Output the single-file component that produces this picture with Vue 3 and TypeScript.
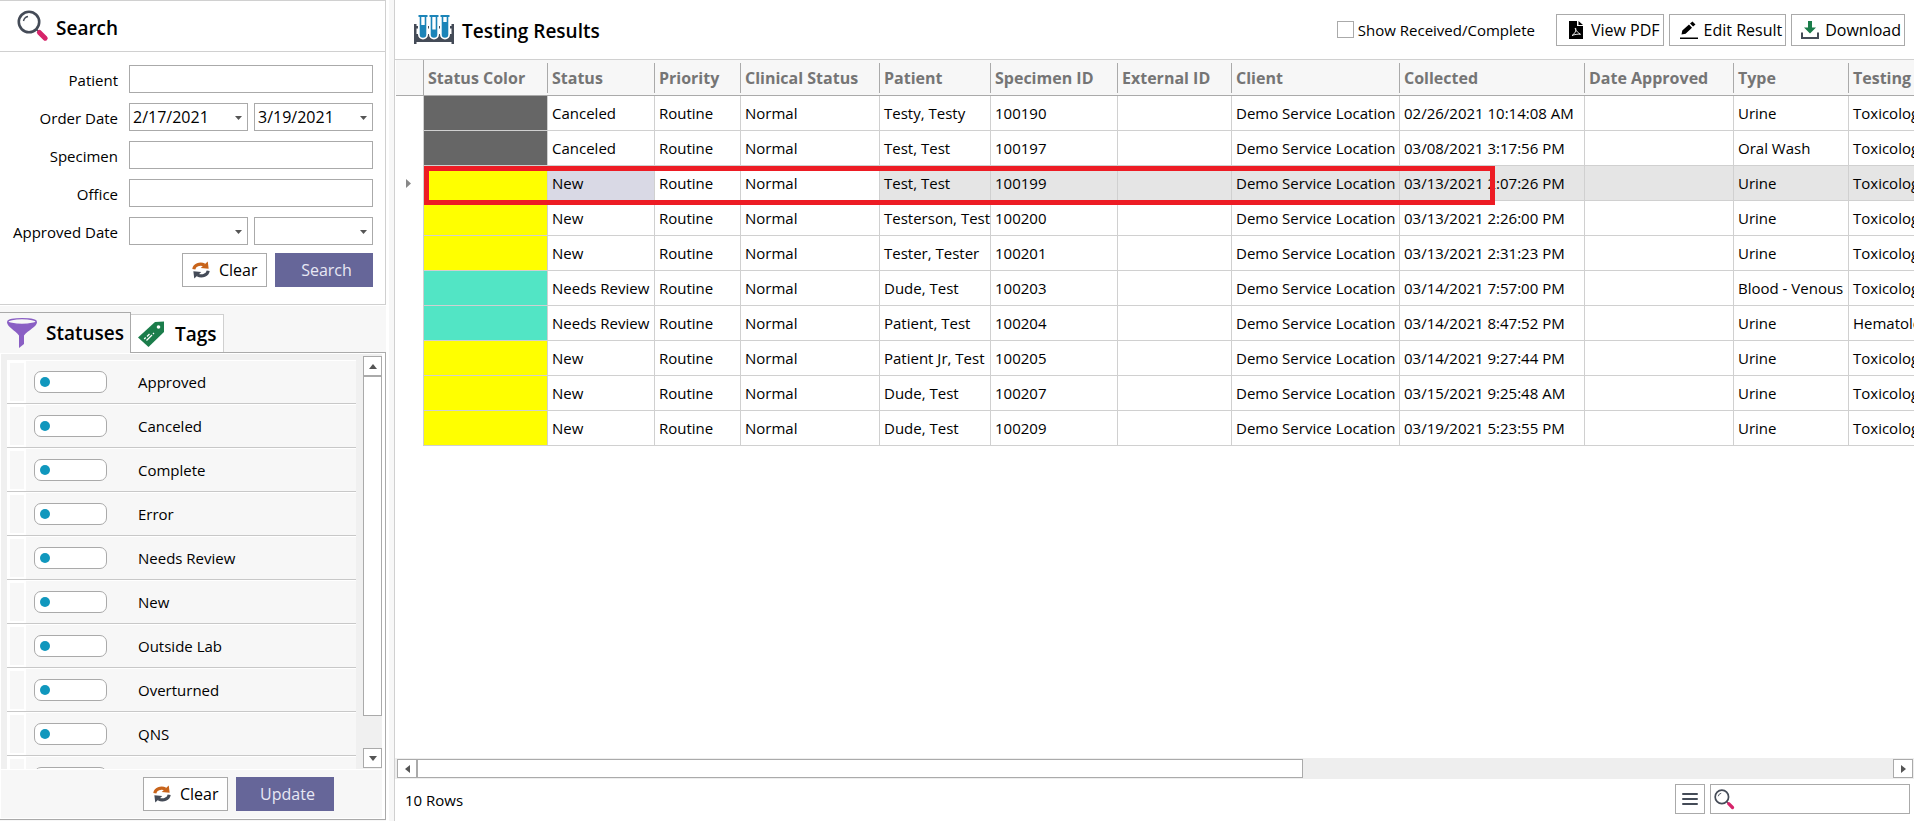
<script setup lang="ts">
import { ref } from 'vue'

interface Column { key: string; label: string; width: number }
interface Row {
  color: string; status: string; patient: string; specimen: string
  collected: string; type: string; testing: string
}

const columns: Column[] = [
  { key: 'color', label: 'Status Color', width: 124 },
  { key: 'status', label: 'Status', width: 107 },
  { key: 'priority', label: 'Priority', width: 86 },
  { key: 'clinical', label: 'Clinical Status', width: 139 },
  { key: 'patient', label: 'Patient', width: 111 },
  { key: 'specimen', label: 'Specimen ID', width: 127 },
  { key: 'external', label: 'External ID', width: 114 },
  { key: 'client', label: 'Client', width: 168 },
  { key: 'collected', label: 'Collected', width: 185 },
  { key: 'approved', label: 'Date Approved', width: 149 },
  { key: 'type', label: 'Type', width: 115 },
  { key: 'testing', label: 'Testing', width: 159 },
]

const rows: Row[] = [
  { color: 'gray', status: 'Canceled', patient: 'Testy, Testy', specimen: '100190', collected: '02/26/2021 10:14:08 AM', type: 'Urine', testing: 'Toxicology' },
  { color: 'gray', status: 'Canceled', patient: 'Test, Test', specimen: '100197', collected: '03/08/2021 3:17:56 PM', type: 'Oral Wash', testing: 'Toxicology' },
  { color: 'yellow', status: 'New', patient: 'Test, Test', specimen: '100199', collected: '03/13/2021 2:07:26 PM', type: 'Urine', testing: 'Toxicology' },
  { color: 'yellow', status: 'New', patient: 'Testerson, Test', specimen: '100200', collected: '03/13/2021 2:26:00 PM', type: 'Urine', testing: 'Toxicology' },
  { color: 'yellow', status: 'New', patient: 'Tester, Tester', specimen: '100201', collected: '03/13/2021 2:31:23 PM', type: 'Urine', testing: 'Toxicology' },
  { color: 'teal', status: 'Needs Review', patient: 'Dude, Test', specimen: '100203', collected: '03/14/2021 7:57:00 PM', type: 'Blood - Venous', testing: 'Toxicology' },
  { color: 'teal', status: 'Needs Review', patient: 'Patient, Test', specimen: '100204', collected: '03/14/2021 8:47:52 PM', type: 'Urine', testing: 'Hematology' },
  { color: 'yellow', status: 'New', patient: 'Patient Jr, Test', specimen: '100205', collected: '03/14/2021 9:27:44 PM', type: 'Urine', testing: 'Toxicology' },
  { color: 'yellow', status: 'New', patient: 'Dude, Test', specimen: '100207', collected: '03/15/2021 9:25:48 AM', type: 'Urine', testing: 'Toxicology' },
  { color: 'yellow', status: 'New', patient: 'Dude, Test', specimen: '100209', collected: '03/19/2021 5:23:55 PM', type: 'Urine', testing: 'Toxicology' },
]

const selected = ref(2)

function cell(row: Row, key: string): string {
  if (key === 'priority') return 'Routine'
  if (key === 'clinical') return 'Normal'
  if (key === 'client') return 'Demo Service Location'
  if (key === 'color' || key === 'external' || key === 'approved') return ''
  return row[key as keyof Row]
}

const statuses = ref(
  ['Approved', 'Canceled', 'Complete', 'Error', 'Needs Review', 'New', 'Outside Lab', 'Overturned', 'QNS', '']
    .map((name) => ({ name, on: false })),
)

const patient = ref('')
const specimen = ref('')
const office = ref('')
const orderFrom = ref('2/17/2021')
const orderTo = ref('3/19/2021')
const approvedFrom = ref('')
const approvedTo = ref('')
const showAll = ref(false)
const find = ref('')
</script>

<template>
  <div class="app">
    <svg class="defs" width="0" height="0" aria-hidden="true">
      <symbol id="magnifier" viewBox="0 0 32 32">
        <circle cx="12" cy="12" r="10.2" fill="#fff" stroke="#444b57" stroke-width="2.6" />
        <path d="M6.500 11a5.600 5.600 0 0 1 4.500-4.500" fill="none" stroke="#444b57" stroke-width="1.400" />
        <path d="M19.400 19.400l2.600 2.600" stroke="#444b57" stroke-width="1.600" />
        <path d="M22.400 22.400l5.800 5.800" stroke="#d6246a" stroke-width="5" stroke-linecap="round" />
      </symbol>
      <symbol id="refresh" viewBox="0 0 20 20">
        <path d="M2 9.200C2.600 4.800 8.500 1.800 14 4.600" fill="none" stroke="#c8641b" stroke-width="3.400" />
        <path d="M17.500.5l1 8.200-8.800-1z" fill="#c8641b" />
        <path d="M18 10.800c-.6 4.400-6.500 7.400-12 4.600" fill="none" stroke="#444b57" stroke-width="3.400" />
        <path d="M2.500 19.500l-1-8.200 8.800 1z" fill="#444b57" />
      </symbol>
    </svg>

    <aside class="side">
      <form class="search" @submit.prevent>
        <header class="search-head">
          <svg class="i32" aria-hidden="true"><use href="#magnifier" /></svg>
          <h2>Search</h2>
        </header>
        <div class="fields">
          <label for="patient">Patient</label>
          <input id="patient" v-model="patient" type="text" class="box" />
          <label for="order-from">Order Date</label>
          <div class="pair">
            <span class="drop">
              <select id="order-from" v-model="orderFrom" class="box"><option>2/17/2021</option></select>
              <svg viewBox="0 0 7 4" aria-hidden="true"><path d="M0 0h7L3.500 4z" /></svg>
            </span>
            <span class="drop">
              <select v-model="orderTo" class="box" aria-label="Order Date to"><option>3/19/2021</option></select>
              <svg viewBox="0 0 7 4" aria-hidden="true"><path d="M0 0h7L3.500 4z" /></svg>
            </span>
          </div>
          <label for="specimen">Specimen</label>
          <input id="specimen" v-model="specimen" type="text" class="box" />
          <label for="office">Office</label>
          <input id="office" v-model="office" type="text" class="box" />
          <label for="approved-from">Approved Date</label>
          <div class="pair">
            <span class="drop">
              <select id="approved-from" v-model="approvedFrom" class="box"><option value=""></option></select>
              <svg viewBox="0 0 7 4" aria-hidden="true"><path d="M0 0h7L3.500 4z" /></svg>
            </span>
            <span class="drop">
              <select v-model="approvedTo" class="box" aria-label="Approved Date to"><option value=""></option></select>
              <svg viewBox="0 0 7 4" aria-hidden="true"><path d="M0 0h7L3.500 4z" /></svg>
            </span>
          </div>
        </div>
        <div class="actions">
          <button type="button" class="btn clear"><svg class="i18" aria-hidden="true"><use href="#refresh" /></svg>Clear</button>
          <button type="submit" class="btn primary">Search</button>
        </div>
      </form>

      <section class="filters">
        <div class="tabs" role="tablist">
          <button class="tab active" role="tab" aria-selected="true">
            <svg class="i32" viewBox="0 0 32 32" aria-hidden="true">
              <path d="M1 5c0 5 8 8 12 13.500V31l5-4v-8.500C22 13 31 10 31 5z" fill="#8a5fc4" />
              <ellipse cx="16" cy="4.500" rx="14.200" ry="2.900" fill="#f7f7f7" stroke="#8a5fc4" stroke-width="1.400" />
            </svg>
            Statuses
          </button>
          <button class="tab" role="tab" aria-selected="false">
            <svg class="i28" viewBox="0 0 28 28" aria-hidden="true">
              <path d="M1 17.500L18 2l9-.5V12L11.500 27z" fill="#1b7d4b" />
              <circle cx="21.500" cy="7" r="1.800" fill="#fff" />
              <path d="M7.200 19l1.500-1.500M10 16.500l2.500-2.500M9.500 20.500l5.500-5.500M16 14l1-1" stroke="#fff" stroke-width="1.300" />
            </svg>
            Tags
          </button>
        </div>
        <div class="panel">
          <div class="list-area">
            <ul class="list">
              <li v-for="(s, i) in statuses" :key="i">
                <span class="grip"></span>
                <input :id="'status-' + i" v-model="s.on" type="checkbox" role="switch" class="toggle" />
                <label :for="'status-' + i">{{ s.name }}</label>
              </li>
            </ul>
            <div class="vbar">
              <button type="button" class="arrow" aria-label="Scroll up"><svg viewBox="0 0 8 5" aria-hidden="true"><path d="M0 5h8L4 0z" /></svg></button>
              <div class="thumb"></div>
              <button type="button" class="arrow" aria-label="Scroll down"><svg viewBox="0 0 8 5" aria-hidden="true"><path d="M0 0h8L4 5z" /></svg></button>
            </div>
          </div>
          <div class="panel-foot">
            <button type="button" class="btn clear"><svg class="i18" aria-hidden="true"><use href="#refresh" /></svg>Clear</button>
            <button type="button" class="btn primary">Update</button>
          </div>
        </div>
      </section>
    </aside>

    <main class="main">
      <header class="main-head">
        <svg class="rack" viewBox="0 0 40 30" aria-hidden="true">
          <path d="M0 9h2.500v10h35V9H40v20h-2.500v-2h-35v2H0z" fill="#444b57" />
          <path d="M2 11h36v2.500H2z" fill="#444b57" />
          <g v-for="x in [9, 20, 31]" :key="x">
            <path :d="`M${x - 4} 1h8v18.500a4 4 0 0 1-8 0z`" fill="#fff" stroke="#fff" stroke-width="2" />
            <path :d="`M${x - 2.5} 1v18.500a2.500 2.500 0 0 0 5 0V1`" fill="#fff" stroke="#1b84b8" stroke-width="1.600" />
            <path :d="`M${x - 4.5} 1h9`" stroke="#1b84b8" stroke-width="2" />
          </g>
          <path d="M6.500 10h5v9.500a2.500 2.500 0 0 1-5 0zM17.500 14.500h5v5a2.500 2.500 0 0 1-5 0zM28.500 7h5v12.500a2.500 2.500 0 0 1-5 0z" fill="#1b84b8" />
        </svg>
        <h1>Testing Results</h1>
        <label class="show"><input v-model="showAll" type="checkbox" />Show Received/Complete</label>
        <div class="tools">
          <button type="button" class="btn tool wide">
            <svg class="i18" viewBox="0 0 18 18" aria-hidden="true">
              <path d="M2 0h8v5h6v13H2zM11.500 0L16 4h-4.500z" />
              <path d="M5 14.500c3-2 4.500-5 3.600-7.500-.8 0-.4 3 4.900 6.300-3-.4-6 .2-8.500 1.200z" fill="none" stroke="#fff" stroke-width=".9" />
            </svg>View PDF
          </button>
          <button type="button" class="btn tool wide">
            <svg class="i18" viewBox="0 0 18 18" aria-hidden="true">
              <path d="M0 16.500h18V18H0zM1.500 13.500l.8-4L9 3.600 12 6.700 5.600 12.800zM10 2.600L12.500.4l3 3-2.400 2.200z" />
            </svg>Edit Result
          </button>
          <button type="button" class="btn tool">
            <svg class="i18" viewBox="0 0 18 18" aria-hidden="true">
              <path d="M7 0h4v6.500h4L9 12.500 3 6.500h4z" fill="#1b7d4b" />
              <path d="M1 11.500V17h16v-5.500" fill="none" stroke="#444b57" stroke-width="2" />
            </svg>Download
          </button>
        </div>
      </header>

      <div class="grid">
        <table>
          <colgroup>
            <col class="mark-col" />
            <col v-for="c in columns" :key="c.key" :style="{ width: c.width + 'px' }" />
          </colgroup>
          <thead>
            <tr>
              <th class="mark" aria-label="Current row"></th>
              <th v-for="c in columns" :key="c.key" scope="col"><span>{{ c.label }}</span></th>
            </tr>
          </thead>
          <tbody>
            <tr v-for="(r, i) in rows" :key="r.specimen" :class="{ selected: i === selected }" @click="selected = i">
              <td class="mark">
                <svg v-if="i === selected" viewBox="0 0 5 9" aria-hidden="true"><path d="M0 0l5 4.500L0 9z" /></svg>
              </td>
              <td v-for="c in columns" :key="c.key" :class="[c.key, c.key === 'color' ? r.color : '']">{{ cell(r, c.key) }}</td>
            </tr>
          </tbody>
        </table>
        <div class="highlight"></div>
      </div>

      <div class="hbar">
        <button type="button" class="arrow" aria-label="Scroll left"><svg viewBox="0 0 5 8" aria-hidden="true"><path d="M5 0v8L0 4z" /></svg></button>
        <div class="track"><div class="thumb"></div></div>
        <button type="button" class="arrow" aria-label="Scroll right"><svg viewBox="0 0 5 8" aria-hidden="true"><path d="M0 0v8l5-4z" /></svg></button>
      </div>

      <footer class="main-foot">
        <span>10 Rows</span>
        <button type="button" class="menu" aria-label="Menu"><svg viewBox="0 0 16 14" aria-hidden="true"><path d="M1 2h14M1 7h14M1 12h14" /></svg></button>
        <label class="find">
          <svg aria-hidden="true"><use href="#magnifier" /></svg>
          <input v-model="find" type="text" aria-label="Search rows" />
        </label>
      </footer>
    </main>
  </div>
</template>

<style>
body { background: #fff; }
</style>

<style scoped>
* { box-sizing: border-box; }
.app {
  display: flex;
  height: 100vh;
  overflow: hidden;
  background: #f7f7f7;
  color: #000;
  font: 15px/20px "Open Sans", "Noto Sans", sans-serif;
}
.defs { position: absolute; }
button, input, select { font: inherit; color: inherit; margin: 0; border-radius: 0; }
button { cursor: pointer; }
h1, h2 { margin: 0; padding-top: 3px; font-size: 19px; line-height: 26px; font-weight: 600; }
svg { flex: none; display: block; }
.i32 { width: 32px; height: 32px; }
.i28 { width: 28px; height: 28px; }
.i18 { width: 18px; height: 18px; }

.side { flex: none; width: 389px; padding-right: 3px; background: #fff; display: flex; flex-direction: column; }
.search { border: 1px solid #d0d0d0; border-left: 0; background: #fff; padding-bottom: 17px; }
.search-head { display: flex; align-items: center; gap: 7px; height: 51px; padding-left: 17px; border-bottom: 1px solid #d0d0d0; }
.fields { display: grid; grid-template-columns: 118px 1fr; column-gap: 11px; row-gap: 10px; padding: 13px 12px 0 0; }
.fields label { text-align: right; padding-top: 5px; white-space: nowrap; }
.box { width: 100%; height: 28px; border: 1px solid #aaa; background: #fff; padding: 0 3px; outline: none; appearance: none; display: block; font-size: 16px; }
.pair { display: grid; grid-template-columns: 1fr 1fr; gap: 6px; }
.drop { position: relative; }
.drop svg { position: absolute; right: 6px; top: 13px; width: 7px; height: 4px; fill: #555; pointer-events: none; }
.actions { display: flex; justify-content: flex-end; gap: 8px; padding: 8px 12px 0 0; }
.btn { display: flex; align-items: center; height: 34px; border: 1px solid #aaa; background: #fff; font-size: 16px; white-space: nowrap; }
.clear { width: 85px; gap: 9px; padding: 0 0 0 9px; }
.primary { width: 98px; justify-content: center; padding: 0 0 0 5px; background: #666699; border-color: #666699; color: #e8e8f4; }

.filters { flex: 1; min-height: 0; margin-top: 1px; padding: 6px 0 1px; background: #f7f7f7; display: flex; flex-direction: column; }
.tabs { display: flex; align-items: flex-end; height: 41px; border-bottom: 1px solid #aaa; }
.tab { display: flex; align-items: center; height: 38px; gap: 10px; padding: 0 6px; border: 1px solid #d0d0d0; border-width: 1px 1px 0 0; background: #fff; font-size: 19px; font-weight: 600; white-space: nowrap; }
.tab.active { height: 41px; margin-bottom: -1px; gap: 8px; padding: 0 6px; background: #f7f7f7; border-color: #aaa; }
.panel { flex: 1; min-height: 0; display: flex; flex-direction: column; border: 1px solid #aaa; border-width: 0 1px 1px 0; padding: 1px 3px 1px 1px; background: #fff; }
.list-area { flex: 1; min-height: 0; overflow: hidden; display: flex; gap: 7px; background: #f0f0f0; }
.list { flex: 1; margin: 0; padding: 6px 0 0 6px; list-style: none; overflow: hidden; }
.list li { display: flex; align-items: center; height: 44px; border-bottom: 1px solid #c8c8c8; background: #f7f7f7; border-top: 1px solid #fff; }
.grip { align-self: stretch; width: 19px; border: solid #fff; border-width: 2px 2px 2px 3px; background: #f7f7f7; }
.toggle { appearance: none; width: 73px; height: 22px; margin-left: 8px; border: 1px solid #aaa; border-radius: 7px; background: #fff; display: flex; align-items: center; padding: 0 5px; }
.toggle::before { content: ""; width: 10px; height: 10px; border-radius: 50%; background: #1097bd; }
.toggle:checked { justify-content: flex-end; }
.list label { padding-left: 31px; }
.vbar { flex: none; width: 19px; padding-top: 2px; display: flex; flex-direction: column; }
.arrow { flex: none; width: 19px; height: 20px; padding: 0; border: 1px solid #aaa; background: #fff; display: flex; align-items: center; justify-content: center; }
.arrow svg { width: 8px; height: 5px; fill: #555; }
.vbar .thumb { flex: 1; border: 1px solid #aaa; background: #fff; }
.vbar .thumb + .arrow { margin-top: 32px; margin-bottom: 1px; }
.panel-foot { display: flex; justify-content: flex-end; gap: 8px; padding: 7px 48px 7px 0; background: #f7f7f7; border-top: 1px solid #fff; }

.main { flex: 1; min-width: 0; margin-left: 5px; border-left: 1px solid #d0d0d0; background: #fff; display: flex; flex-direction: column; }
.main-head { flex: none; display: flex; align-items: center; height: 60px; padding: 0 9px 0 19px; border-bottom: 1px solid #d0d0d0; }
.rack { width: 40px; height: 30px; margin-right: 8px; }
.show { margin-left: auto; margin-right: 21px; display: flex; align-items: center; gap: 4px; white-space: nowrap; }
.show input { appearance: none; width: 17px; height: 17px; border: 1px solid #aaa; background: #fff; }
.show input:checked { background: #666699; }
.tools { display: flex; gap: 5px; }
.tool { height: 32px; gap: 6px; padding: 0 3px 0 9px; }
.tool.wide { padding-left: 10px; }

.grid { flex: 1; min-height: 0; overflow: hidden; position: relative; padding-left: 1px; }
table { table-layout: fixed; border-collapse: separate; border-spacing: 0; width: 1612px; }
.mark-col { width: 28px; }
th { height: 36px; padding: 2px 0; border-bottom: 1px solid #aaa; background: #f7f7f7; text-align: left; color: #757575; font-size: 16px; font-weight: 700; }
th span { display: block; height: 30px; line-height: 30px; padding-left: 4px; border-right: 1px solid #aaa; white-space: nowrap; }
th.mark { border-right: 1px solid #aaa; }
td { height: 35px; padding: 0 2px 0 4px; border: solid #d0d0d0; border-width: 0 1px 1px 0; white-space: nowrap; }
td.mark { border-bottom: 0; padding: 0 0 0 10px; }
td.mark svg { width: 5px; height: 9px; fill: #888; }
.gray { background: #666; }
.yellow { background: #ff0; }
.teal { background: #52e5c5; }
.selected td { background: #e5e5e5; }
.selected td.mark, .selected td.priority, .selected td.clinical { background: #fff; }
.selected td.status { background: #d9d9e5; }
.selected td.yellow { background: #ff0; }
.highlight { position: absolute; left: 29px; top: 106px; width: 1071px; height: 39px; border: 5px solid #ed1c24; pointer-events: none; }

.hbar { flex: none; display: flex; height: 21px; padding: 1px 1px 1px 2px; background: #eee; }
.hbar .arrow { height: 19px; width: 20px; }
.hbar .arrow svg { width: 5px; height: 8px; }
.track { flex: 1; }
.track .thumb { width: 60%; height: 19px; border: 1px solid #aaa; background: #fff; }
.main-foot { flex: none; display: flex; align-items: flex-start; gap: 5px; height: 42px; padding: 5px 4px 0 10px; }
.main-foot span { margin-right: auto; line-height: 32px; }
.menu { width: 30px; height: 30px; padding: 0; border: 1px solid #aaa; background: #fff; display: flex; align-items: center; justify-content: center; }
.menu svg { width: 16px; height: 14px; stroke: #444b57; stroke-width: 2; stroke-linecap: round; }
.find { display: flex; width: 200px; height: 30px; border: 1px solid #aaa; padding: 4px 3px; }
.find svg { width: 21px; height: 21px; }
.find input { flex: 1; min-width: 0; border: 0; padding: 0 4px; outline: none; background: none; }
</style>
